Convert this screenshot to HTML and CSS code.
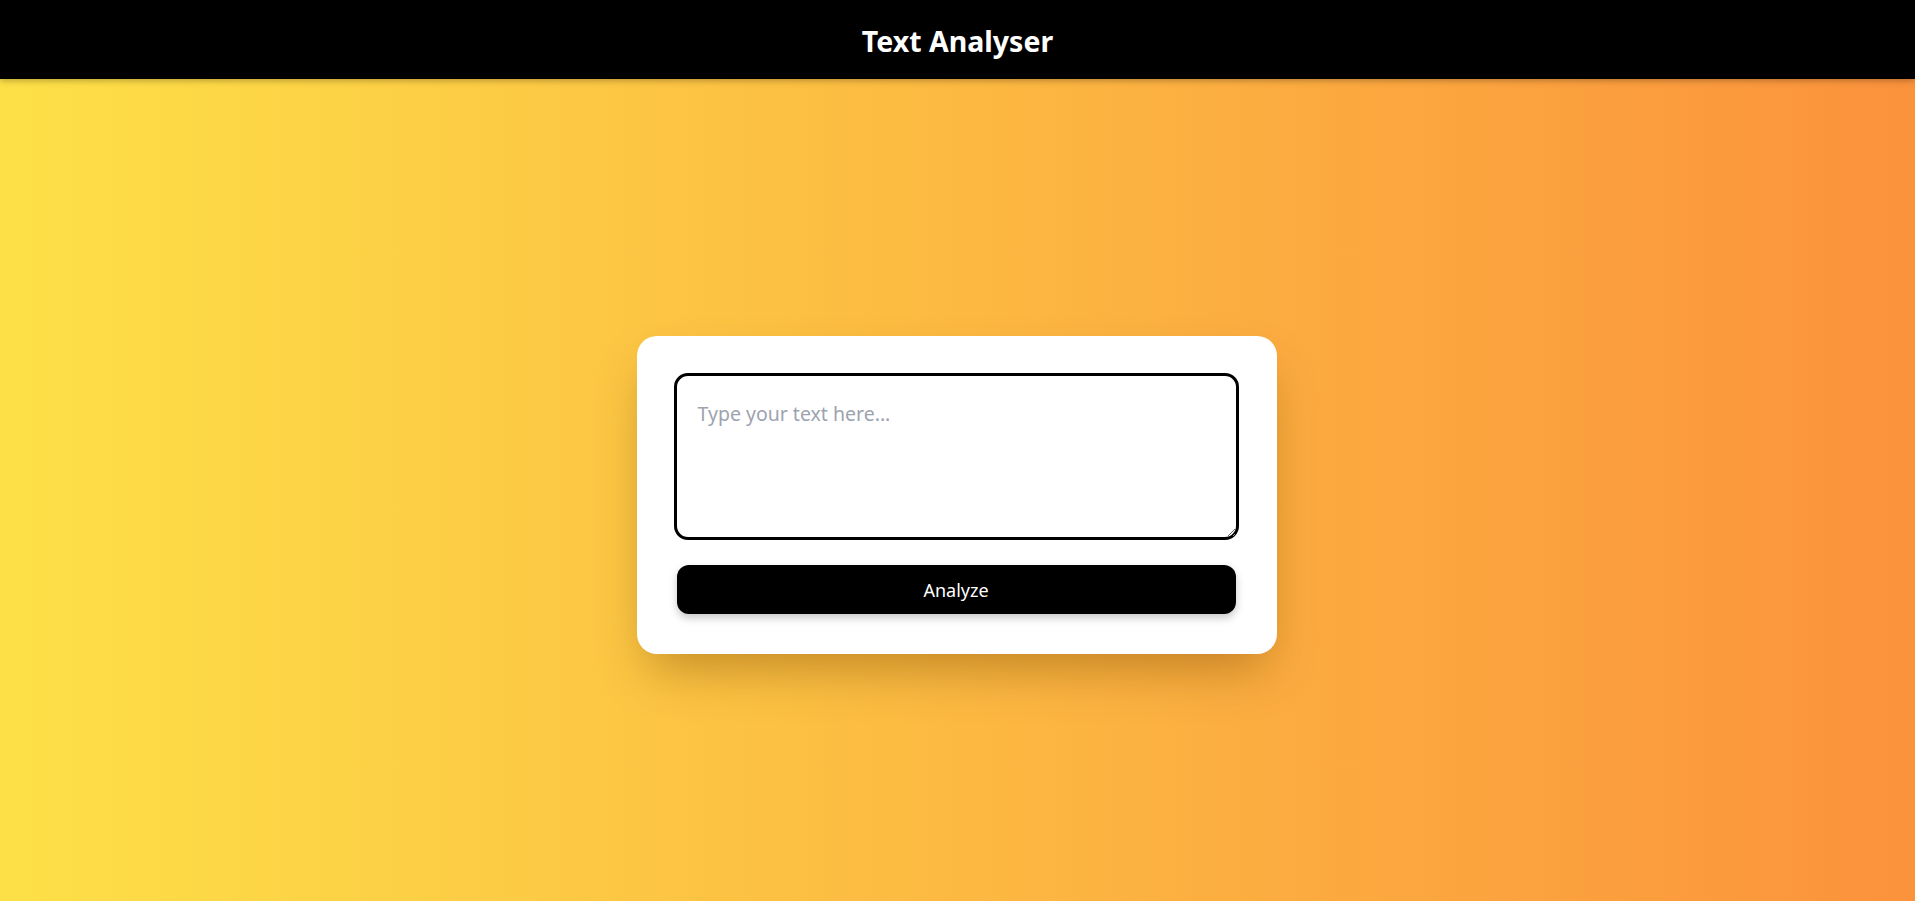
FILE: index.html
```html
<!DOCTYPE html>
<html lang="en">
<head>
<meta charset="utf-8">
<title>Text Analyser</title>
<link rel="stylesheet" href="styles.css">
</head>
<body>
<header class="topbar">
  <h1 class="title">Text Analyser</h1>
</header>
<main class="main">
  <div class="card">
    <textarea class="input" placeholder="Type your text here..." autofocus></textarea>
    <button class="btn" type="button">Analyze</button>
  </div>
</main>
</body>
</html>
```
FILE: styles.css
```css
* { box-sizing: border-box; }
html, body { margin: 0; padding: 0; height: 100%; }
body {
  font-family: "Noto Sans", "Open Sans", Arial, sans-serif;
  background: linear-gradient(to right, #fde047, #fb923c);
  min-height: 100vh;
  display: flex;
  flex-direction: column;
}
.topbar {
  height: 79px;
  background: #000;
  display: flex;
  align-items: center;
  justify-content: center;
  box-shadow: 0 2px 6px rgba(0,0,0,0.25);
  position: relative;
  z-index: 1;
}
.title {
  margin: 0;
  color: #fff;
  font-size: 28.5px;
  font-weight: 700;
  line-height: 36px;
  padding-top: 3px;
}
.main {
  flex: 1;
  display: flex;
  align-items: center;
  justify-content: center;
  padding-top: 10px;
  padding-right: 2px;
}
.card {
  width: 640px;
  background: #fff;
  border-radius: 20px;
  padding: 37px 38px 40px 37px;
  display: flex;
  flex-direction: column;
  gap: 25px;
  box-shadow: 0 25px 50px -12px rgba(120, 70, 0, 0.45);
}
.input {
  display: block;
  width: 100%;
  height: 167px;
  border: 3px solid #000;
  border-radius: 14px;
  padding: 24px 21px 16px 21px;
  font-family: inherit;
  font-size: 19.5px;
  line-height: 28px;
  color: #111;
  resize: vertical;
  outline: none;
}
.input::placeholder { color: #9ca3af; }
.btn {
  align-self: center;
  width: 559px;
  height: 49px;
  border: none;
  border-radius: 12px;
  background: #000;
  color: #fff;
  font-family: inherit;
  font-size: 18px;
  box-shadow: 0 4px 8px rgba(0,0,0,0.22);
  cursor: pointer;
}
```
